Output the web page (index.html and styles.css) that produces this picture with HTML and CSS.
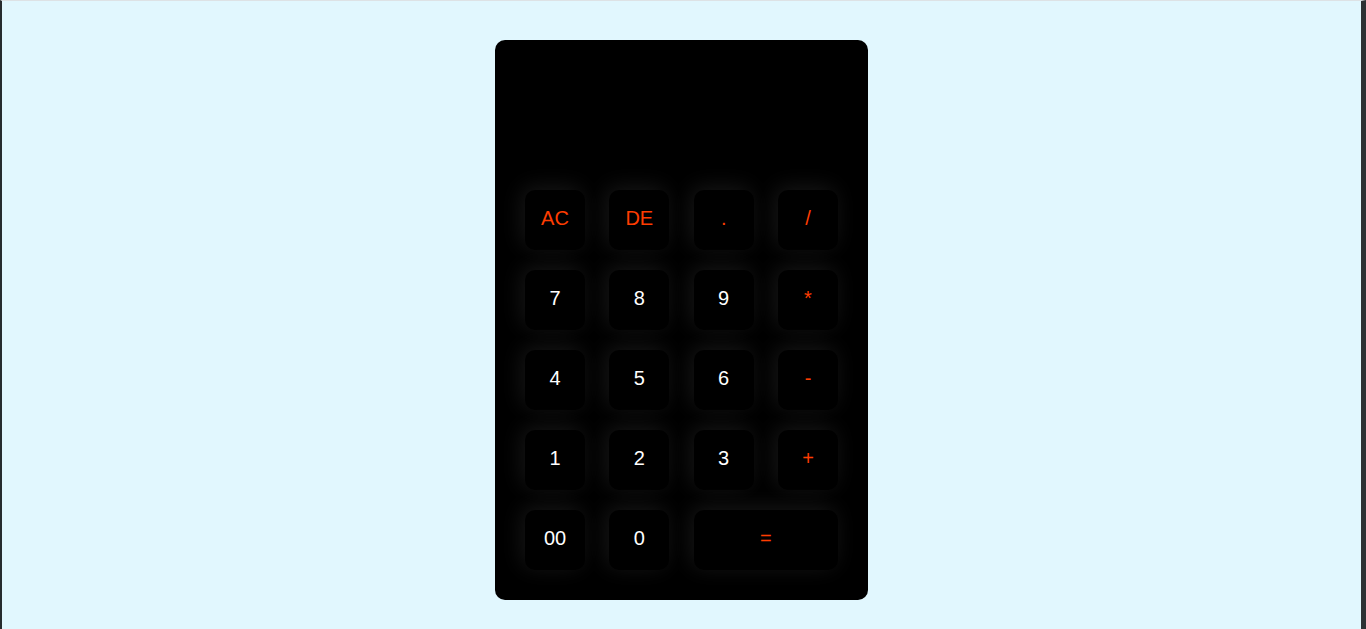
FILE: index.html
```html
<!DOCTYPE html>
<html>
<head>
<meta charset="utf-8">
<link rel="stylesheet" href="styles.css">
</head>
<body>
<div class="frame">
  <div class="calc">
    <div class="display"></div>
    <div class="keys">
      <button class="key op">AC</button>
      <button class="key op">DE</button>
      <button class="key op">.</button>
      <button class="key op">/</button>
      <button class="key">7</button>
      <button class="key">8</button>
      <button class="key">9</button>
      <button class="key op">*</button>
      <button class="key">4</button>
      <button class="key">5</button>
      <button class="key">6</button>
      <button class="key op">-</button>
      <button class="key">1</button>
      <button class="key">2</button>
      <button class="key">3</button>
      <button class="key op">+</button>
      <button class="key">00</button>
      <button class="key">0</button>
      <button class="key op wide">=</button>
    </div>
  </div>
</div>
</body>
</html>
```

FILE: styles.css
```css
html, body {
  margin: 0;
  padding: 0;
}
body {
  height: 100vh;
  box-sizing: border-box;
  background: #e1f7fe;
  border-top: 1px solid #dde2e5;
  border-left: 2px solid #262c2e;
  border-right: 5px solid #2c3234;
  font-family: "Liberation Sans", Arial, sans-serif;
  overflow: hidden;
}
.frame {
  display: flex;
  justify-content: center;
  padding-top: 39px;
}
.calc {
  width: 373px;
  box-sizing: border-box;
  background: #000;
  border-radius: 10px;
  padding: 30px;
}
.display {
  height: 120px;
}
.keys {
  display: grid;
  grid-template-columns: repeat(4, 60px);
  grid-auto-rows: 60px;
  justify-content: space-between;
  row-gap: 20px;
}
.key {
  border: none;
  background: #000;
  color: #fff;
  border-radius: 10px;
  font-family: "Liberation Sans", Arial, sans-serif;
  font-size: 20px;
  padding: 0 0 4px 0;
  box-shadow: -3px -3px 22px rgba(255, 255, 255, 0.09);
}
.key.op {
  color: #ff3d00;
}
.key.wide {
  grid-column: span 2;
}
```
